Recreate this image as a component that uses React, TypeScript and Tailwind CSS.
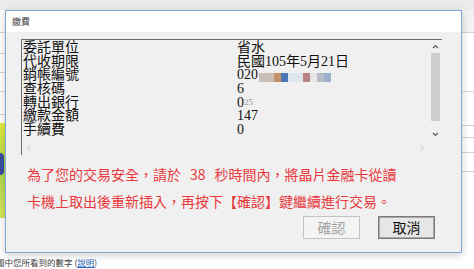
import React from "react"

const rows = [
  { label: "委託單位", value: <span>省水</span> },
  { label: "代收期限", value: <span>民國105年5月21日</span> },
  {
    label: "銷帳編號",
    value: (
      <span className="flex items-center">
        020
        <span className="ml-[1px] flex h-[13px] items-end">
          <span className="h-[9px] w-[15px] bg-[#c9bfb4]" />
          <span className="h-[9px] w-[7px] bg-[#c59169]" />
          <span className="h-[9px] w-[7px] bg-[#4a76b6]" />
          <span className="h-[9px] w-[15px] bg-[#dde6ee]" />
          <span className="h-[9px] w-[7px] bg-[#b98282]" />
          <span className="h-[9px] w-[7px] bg-[#e6e6e6]" />
          <span className="h-[9px] w-[7px] bg-[#b7bcc6]" />
          <span className="h-[9px] w-[7px] bg-[#9db1cf]" />
        </span>
      </span>
    ),
  },
  { label: "查核碼", value: <span>6</span> },
  {
    label: "轉出銀行",
    value: (
      <span>
        0<span className="text-[#9a9a9a] text-[9px] align-top">25</span>
      </span>
    ),
  },
  { label: "繳款金額", value: <span>147</span> },
  { label: "手續費", value: <span>0</span> },
]

export default function App() {
  return (
    <div className="relative h-[269px] w-[474px] overflow-hidden bg-white font-['Noto_Sans_CJK_TC',sans-serif]">
      {/* page behind the dialog */}
      <div className="h-[10px] bg-[#ebebeb]" />
      <div className="flex h-[243px]">
        <div className="flex w-[5px] flex-col">
          <div className="mt-[22px] h-[1px] bg-[#d4d4d4]" />
          <div className="mt-[20px] h-[1px] bg-[#d4d4d4]" />
          <div className="mt-[18px] h-[1px] bg-[#d4d4d4]" />
          <div className="mt-[18px] h-[1px] bg-[#d4d4d4]" />
          <div className="mt-[22px] h-[1px] bg-[#d4d4d4]" />
          <div className="mt-[8px] h-[95px] bg-gradient-to-b from-[#e5ee3a] via-[#a9d64a] to-[#d7e85a]">
            <div className="mt-[30px] h-[22px] w-[4px] rounded-r-full bg-[#3a4ea0]" />
          </div>
        </div>
        <div className="flex-1" />
        <div className="flex w-[12px] flex-col">
          <div className="h-[22px] bg-[#f2f2f2]" />
          <div className="h-[1px] bg-[#d0d0d0]" />
          <div className="mt-[58px] h-[1px] bg-[#dcdcdc]" />
          <div className="mt-[33px] h-[1px] bg-[#d0d0d0]" />
          <div className="mt-[11px] h-[1px] bg-[#d0d0d0]" />
          <div className="mt-[14px] h-[1px] bg-[#d0d0d0]" />
          <div className="mt-[18px] h-[1px] bg-[#d0d0d0]" />
        </div>
      </div>
      <div className="ml-[-4px] mt-[3px] text-[8.5px] leading-[12px] text-[#444]">
        圖中您所看到的數字 (<span className="text-[#1b5fb8] underline">說明</span>)
      </div>

      {/* dialog */}
      <div className="absolute left-[5px] top-[10px] flex h-[243px] w-[457px] flex-col border border-[#7ea7d8] shadow-[0_2px_8px_rgba(0,0,0,0.2)]">
        <div className="flex h-[21px] items-center bg-white pl-[6px] text-[9px] text-[#444]">繳費</div>
        <div className="flex flex-1 flex-col bg-[#f0f0f0] pl-[15px] pt-[7px]">
          {/* read-only list box */}
          <div className="flex h-[116px] w-[421px] flex-col border-l border-t border-[#6d6d6d] bg-[#f0f0f0]">
            <div className="flex flex-1">
              <div className="flex-1 pl-[1px] pt-[1px] font-['Liberation_Serif','Noto_Sans_CJK_TC',serif] text-[14px] leading-[13.7px] text-[#111]">
                {rows.map((r) => (
                  <div key={r.label} className="flex h-[13.7px] items-center">
                    <span className="w-[214px] shrink-0">{r.label}</span>
                    {r.value}
                  </div>
                ))}
              </div>
              <div className="flex w-[13px] flex-col items-center bg-[#f0f0f0]">
                <svg width="9" height="11" viewBox="0 0 9 11" className="mt-[1px]">
                  <path d="M2 7 L4.5 4.5 L7 7" stroke="#606060" strokeWidth="1.2" fill="none" />
                </svg>
                <div className="mt-[1px] h-[68px] w-[9px] bg-[#cdcdcd]" />
                <div className="flex-1" />
                <svg width="9" height="11" viewBox="0 0 9 11" className="mb-[1px]">
                  <path d="M2 4 L4.5 6.5 L7 4" stroke="#606060" strokeWidth="1.2" fill="none" />
                </svg>
              </div>
            </div>
            <div className="flex h-[14px] items-center">
              <div className="flex flex-1 items-center justify-between px-[4px]">
                <svg width="6" height="9" viewBox="0 0 6 9">
                  <path d="M4 1.5 L1.5 4.5 L4 7.5" stroke="#c4c4c4" strokeWidth="1" fill="none" />
                </svg>
                <svg width="6" height="9" viewBox="0 0 6 9">
                  <path d="M2 1.5 L4.5 4.5 L2 7.5" stroke="#c4c4c4" strokeWidth="1" fill="none" />
                </svg>
              </div>
              <div className="h-[14px] w-[13px] bg-[#f0f0f0]" />
            </div>
          </div>

          {/* warning */}
          <div className="mt-[6px] pl-[6px] text-[14px] leading-[27px] text-[#e8383c]">
            <div>
              為了您的交易安全，請於<span className="px-[9px]">38</span>秒時間內，將晶片金融卡從讀
            </div>
            <div>卡機上取出後重新插入，再按下【確認】鍵繼續進行交易。</div>
          </div>

          <div className="mt-[1px] flex justify-end gap-[18px] pr-[26px]">
            <button
              disabled
              className="flex h-[23px] w-[57px] items-center justify-center border border-[#c3c3c3] bg-[#f4f4f4] text-[14px] text-[#a3a3a3]"
            >
              確認
            </button>
            <button className="flex h-[23px] w-[57px] items-center justify-center border border-[#7a7a7a] bg-[#e6e6e6] text-[14px] text-[#111] shadow-[inset_0_0_0_1px_#a8a8a8]">
              取消
            </button>
          </div>
        </div>
      </div>
    </div>
  )
}
